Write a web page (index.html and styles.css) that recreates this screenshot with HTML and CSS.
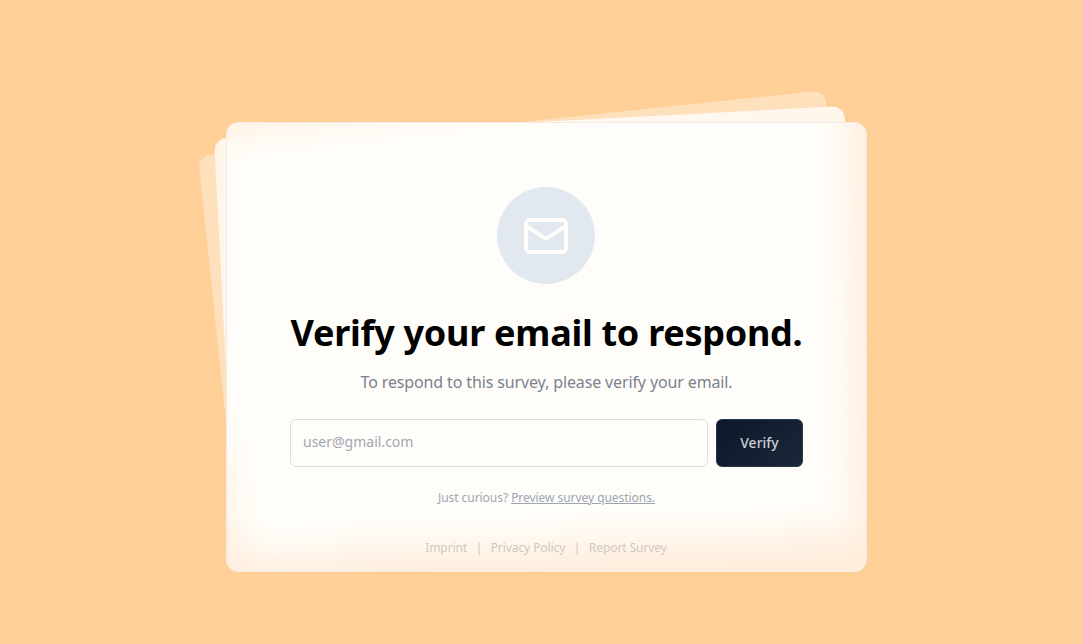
FILE: index.html
```html
<!DOCTYPE html>
<html lang="en">
<head>
<meta charset="utf-8">
<title>Verify your email</title>
<link rel="stylesheet" href="styles.css">
</head>
<body>
<main class="stack">
  <div class="sheet sheet-back"></div>
  <div class="sheet sheet-middle"></div>
  <section class="card">
    <div class="glow"><div class="glow-plate"></div></div>
    <div class="badge">
      <svg class="mail" viewBox="0 0 24 24" fill="none" stroke="currentColor" stroke-width="2" stroke-linecap="round" stroke-linejoin="round"><rect x="2" y="4" width="20" height="16" rx="2"/><path d="m22 7-8.97 5.7a1.94 1.94 0 0 1-2.06 0L2 7"/></svg>
    </div>
    <h1 class="title">Verify your email to respond.</h1>
    <p class="subtitle">To respond to this survey, please verify your email.</p>
    <form class="form">
      <input class="email" type="email" placeholder="user@gmail.com">
      <button class="submit" type="button">Verify</button>
    </form>
    <p class="preview">Just curious? <span class="link">Preview survey questions.</span></p>
    <footer class="legal"><span>Imprint</span><span>|</span><span>Privacy Policy</span><span>|</span><span>Report Survey</span></footer>
  </section>
</main>
</body>
</html>
```

FILE: styles.css
```css
* { box-sizing: border-box; }
body {
  display: flow-root;
  margin: 0;
  height: 644px;
  overflow: hidden;
  background: #fecf96;
  font-family: "Noto Sans", sans-serif;
}
.stack {
  position: relative;
  width: 641px;
  height: 450px;
  margin: 122px 0 0 226px;
}
.sheet {
  position: absolute;
  transform-origin: 0 0;
  border-radius: 12px;
}
.sheet-back {
  left: -28.5px;
  top: 34px;
  width: 630px;
  height: 360px;
  background: #fee0bc;
  transform: rotate(-6deg);
}
.sheet-middle {
  left: -11.7px;
  top: 17.2px;
  width: 631px;
  height: 370px;
  background: linear-gradient(90deg, #fff5e9, #fffaf3 50%, #fff6ec);
  transform: rotate(-3deg);
}
.card {
  position: relative;
  isolation: isolate;
  height: 100%;
  padding: 64px 63px 0;
  border: 1px solid #f2ebe3;
  border-radius: 12px;
  background: #ffeedd;
  display: flex;
  flex-direction: column;
  align-items: center;
}
.glow {
  position: absolute;
  inset: 0;
  z-index: -1;
  overflow: hidden;
  border-radius: 11px;
}
.glow-plate {
  width: 100%;
  height: 100%;
  filter: blur(17px);
}
.glow-plate::before {
  content: "";
  position: absolute;
  inset: -60px;
  background: #fffdf9;
  clip-path: polygon(0 76px, 400px 28px, 680px 0, 688px 470px, 72px 492px, 50px 380px, 10px 240px);
}
.badge {
  display: flex;
  width: 98px;
  height: 97px;
  margin-right: 1px;
  align-items: center;
  justify-content: center;
  border-radius: 50%;
  background: #e2e8f0;
  color: #fffdfa;
}
.mail { width: 48px; height: 48px; }
.title {
  margin: 29px 0 0;
  font-size: 36px;
  line-height: 40px;
  font-weight: 700;
  letter-spacing: -0.27px;
  white-space: nowrap;
  color: #000;
}
.subtitle {
  margin: 17px 0 0;
  font-size: 16px;
  line-height: 24px;
  letter-spacing: -0.13px;
  color: #7b818d;
}
.form {
  display: flex;
  gap: 8px;
  width: 513px;
  margin: 25px 0 0;
}
.email {
  flex: 1;
  min-width: 0;
  height: 48px;
  padding: 0 12px 3px;
  border: 1px solid #dcdfe0;
  border-radius: 6px;
  background: transparent;
  font: 14px/20px "Noto Sans", sans-serif;
}
.email::placeholder { color: #a0a8b2; }
.submit {
  width: 87px;
  height: 48px;
  padding: 0 0 1px;
  border: 1px solid #27384e;
  border-radius: 6px;
  background: linear-gradient(135deg, #0f172a, #1a2639);
  color: #cbd0d6;
  font: 500 14px/20px "Noto Sans", sans-serif;
}
.preview {
  margin: 23px 0 0;
  font-size: 12px;
  line-height: 16px;
  letter-spacing: -0.05px;
  color: #9ca5b1;
}
.link { text-decoration: underline; }
.legal {
  display: flex;
  gap: 8.5px;
  margin: 34px 1px 0 0;
  font-size: 12px;
  line-height: 16px;
  letter-spacing: -0.08px;
  color: #cfc9c2;
}
```
